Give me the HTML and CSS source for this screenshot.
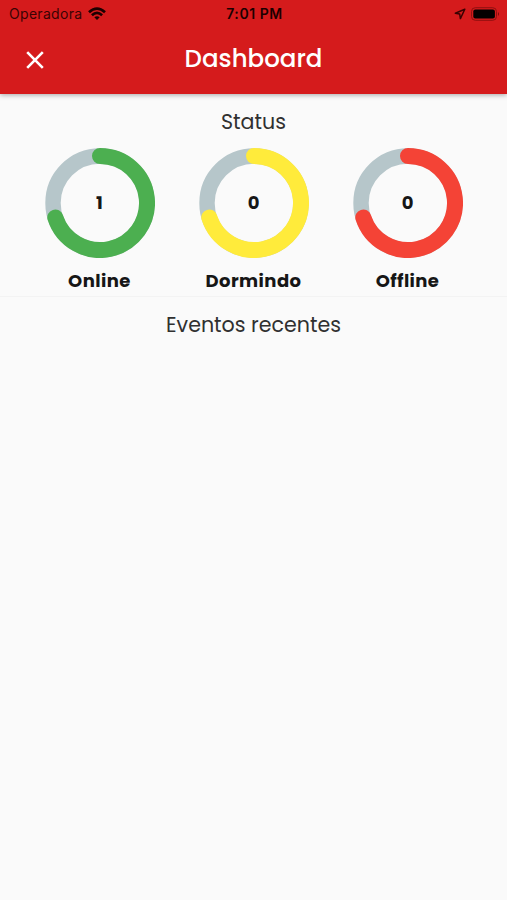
FILE: index.html
```html
<!DOCTYPE html>
<html lang="pt-BR">
<head>
<meta charset="utf-8">
<title>Dashboard</title>
<link rel="stylesheet" href="styles.css">
</head>
<body>
<header class="header">
  <div class="statusbar">
    <div class="carrier"><span class="operator">Operadora</span>
      <svg class="wifi" width="18" height="14" viewBox="0 0 18 14" fill="none" stroke="#1c0000" stroke-width="2.7"><path d="M1 5.2Q9-2 17 5.2M3.9 8.2q5.1-4.5 10.2 0"/><path d="M6.3 10.3q2.7-2.2 5.4 0L9 13z" fill="#1c0000" stroke="none"/></svg>
    </div>
    <span class="clock">7:01 PM</span>
    <div class="indicators">
      <svg width="12" height="12" viewBox="0 0 12 12" fill="none" stroke="#3a0202" stroke-width="1.5" stroke-linejoin="round"><path d="M10.8 1.2 1.3 5.2l4.4.8.7 4.6z"/></svg>
      <svg width="29" height="14" viewBox="0 0 29 14"><rect x=".5" y=".7" width="25" height="12.6" rx="3.8" fill="none" stroke="#8f1010"/><rect x="2.3" y="2.5" width="21.6" height="9" rx="2" fill="#050000"/><path d="M27 5q2 2 0 4z" fill="#7a0b0b"/></svg>
    </div>
  </div>
  <div class="appbar">
    <svg class="close" width="18" height="18" viewBox="0 0 18 18" fill="none" stroke="#fff" stroke-width="2.6"><path d="m1.2 1.2 15.6 15.6m0-15.6L1.2 16.8"/></svg>
    <h1 class="title">Dashboard</h1>
  </div>
</header>
<main>
  <section class="status">
    <h2 class="heading">Status</h2>
    <div class="gauges">
      <div class="gauge online">
        <div class="dial"><svg class="ring" viewBox="0 0 110 110"><circle class="track" cx="55" cy="55" r="47"/><path class="value" d="M55 8A47 47 0 1 1 10.3 69.5"/></svg><span class="count">1</span></div>
        <span class="label">Online</span>
      </div>
      <div class="gauge sleeping">
        <div class="dial"><svg class="ring" viewBox="0 0 110 110"><circle class="track" cx="55" cy="55" r="47"/><path class="value" d="M55 8A47 47 0 1 1 10.3 69.5"/></svg><span class="count">0</span></div>
        <span class="label">Dormindo</span>
      </div>
      <div class="gauge offline">
        <div class="dial"><svg class="ring" viewBox="0 0 110 110"><circle class="track" cx="55" cy="55" r="47"/><path class="value" d="M55 8A47 47 0 1 1 10.3 69.5"/></svg><span class="count">0</span></div>
        <span class="label">Offline</span>
      </div>
    </div>
  </section>
  <section class="events"><h2 class="heading">Eventos recentes</h2></section>
</main>
</body>
</html>
```
FILE: styles.css
```css
* { box-sizing: border-box; }
body { margin: 0; min-height: 900px; background: #fafafa; color: #161616; font-family: Poppins, Inter, sans-serif; }
.header { height: 94px; background: #d51b1c; box-shadow: 0 1px 5px rgba(0,0,0,.34); }
.statusbar { height: 27px; display: grid; grid-template-columns: 1fr auto 1fr; align-items: center; padding: 0 7px 0 9px; color: #1c0000; font: 500 14px/27px Inter, sans-serif; }
.carrier { display: flex; align-items: center; gap: 6px; }
.operator { font-weight: 400; letter-spacing: .3px; color: #3a0303; }
.clock { font-weight: 600; letter-spacing: .55px; }
.indicators { display: flex; align-items: center; justify-content: flex-end; gap: 5px; }
.appbar { height: 67px; display: grid; grid-template-columns: 1fr auto 1fr; align-items: center; padding: 0 26px; }
.title { margin: 0; color: #fff; font-size: 24.5px; font-weight: 500; line-height: 36px; padding-bottom: 4px; }
.close { margin-bottom: 1px; }
.status { height: 203px; border-bottom: 1px solid #f3f3f3; }
.heading { margin: 0; padding-top: 12px; text-align: center; font-size: 20.6px; font-weight: 400; line-height: 32px; color: #303030; }
.gauges { display: grid; grid-template-columns: repeat(3, 154px); justify-content: center; padding-top: 10px; }
.gauge { display: flex; flex-direction: column; align-items: center; }
.dial { display: grid; place-items: center; width: 110px; height: 110px; }
.ring, .count { grid-area: 1 / 1; }
.ring { width: 110px; height: 110px; fill: none; stroke-width: 16; }
.track { stroke: #b6c6ca; stroke-width: 15.4; }
.value { stroke-linecap: round; }
.online .value { stroke: #4caf50; }
.sleeping .value { stroke: #ffeb3b; }
.offline .value { stroke: #f44336; }
.count { font-size: 18px; font-weight: 700; line-height: 24px; padding-bottom: 1px; }
.label { font-size: 18px; font-weight: 700; line-height: 28px; margin-top: 9px; letter-spacing: .45px; }
.offline .label { letter-spacing: .35px; }
```
